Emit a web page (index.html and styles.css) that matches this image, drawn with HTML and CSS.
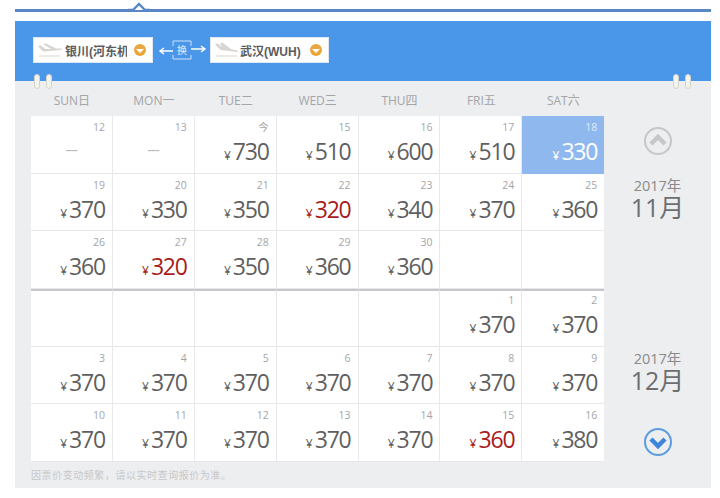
FILE: index.html
```html
<!DOCTYPE html>
<html lang="en">
  <head>
    <meta charset="UTF-8" />
    <title>Fare Calendar</title>
    <link rel="stylesheet" href="styles.css">
  </head>
  <body>
    <div class="topline">
      <svg class="notch" width="22" height="9" viewBox="0 0 22 9"><path d="M0 8H5L11 2L17 8H22" fill="#fff" stroke="#5a86c6" stroke-width="2.4"/></svg>
    </div>

    <div class="card">
      <div class="route">
        <div class="city city-from">
          <svg class="plane" width="26" height="14" viewBox="0 0 26 14"><path d="M1 3L4 2.500L8 6H14L6 1L9 .5L19 5.500H24Q26 6 24 7L7 8.500Q5 8 1 3ZM2 12.500H23V13.500H2Z" fill="#d9d5d0"/></svg>
          <span class="city-name">银川(河东机</span>
          <span class="pick"><i></i></span>
        </div>
        <div class="swap">
          <svg width="50" height="24" viewBox="0 0 50 24"><path d="M3 13H16M7 10L3 13L7 16M34 11H48M44 8L48 11L44 14" fill="none" stroke="#fff" stroke-width="1.500"/><path d="M16 3H34M16 21H34M16 3V8M34 3V8M16 17V21M34 17V21" fill="none" stroke="#cfe2fa" stroke-width="1"/></svg>
          <span class="swap-label">换</span>
        </div>
        <div class="city city-to">
          <svg class="plane" width="26" height="14" viewBox="0 0 26 14"><path d="M1 1L4 .5L8 4.500L6 0H9L17 6L23 7.500Q25 9 23 9L7 7Q5 6 1 1ZM2 12.500H23V13.500H2Z" fill="#d9d5d0"/></svg>
          <span class="city-name">武汉(WUH)</span>
          <span class="pick"><i></i></span>
        </div>
      </div>

      <span class="rings rings-left"><b></b><b></b></span>
      <span class="rings rings-right"><b></b><b></b></span>

      <div class="body">
        <div class="calendar">
          <div class="weekdays">
            <span>SUN日</span><span>MON一</span><span>TUE二</span><span>WED三</span><span>THU四</span><span>FRI五</span><span>SAT六</span>
          </div>
          <div class="grid">
            <div class="cell"><span class="day">12</span><span class="none">---</span></div>
            <div class="cell"><span class="day">13</span><span class="none">---</span></div>
            <div class="cell"><span class="day">今</span><span class="price"><small>¥</small>730</span></div>
            <div class="cell"><span class="day">15</span><span class="price"><small>¥</small>510</span></div>
            <div class="cell"><span class="day">16</span><span class="price"><small>¥</small>600</span></div>
            <div class="cell"><span class="day">17</span><span class="price"><small>¥</small>510</span></div>
            <div class="cell selected"><span class="day">18</span><span class="price"><small>¥</small>330</span></div>

            <div class="cell"><span class="day">19</span><span class="price"><small>¥</small>370</span></div>
            <div class="cell"><span class="day">20</span><span class="price"><small>¥</small>330</span></div>
            <div class="cell"><span class="day">21</span><span class="price"><small>¥</small>350</span></div>
            <div class="cell low"><span class="day">22</span><span class="price"><small>¥</small>320</span></div>
            <div class="cell"><span class="day">23</span><span class="price"><small>¥</small>340</span></div>
            <div class="cell"><span class="day">24</span><span class="price"><small>¥</small>370</span></div>
            <div class="cell"><span class="day">25</span><span class="price"><small>¥</small>360</span></div>

            <div class="cell"><span class="day">26</span><span class="price"><small>¥</small>360</span></div>
            <div class="cell low"><span class="day">27</span><span class="price"><small>¥</small>320</span></div>
            <div class="cell"><span class="day">28</span><span class="price"><small>¥</small>350</span></div>
            <div class="cell"><span class="day">29</span><span class="price"><small>¥</small>360</span></div>
            <div class="cell"><span class="day">30</span><span class="price"><small>¥</small>360</span></div>
            <div class="cell"></div>
            <div class="cell"></div>

            <div class="cell month-start"></div>
            <div class="cell month-start"></div>
            <div class="cell month-start"></div>
            <div class="cell month-start"></div>
            <div class="cell month-start"></div>
            <div class="cell month-start"><span class="day">1</span><span class="price"><small>¥</small>370</span></div>
            <div class="cell month-start"><span class="day">2</span><span class="price"><small>¥</small>370</span></div>

            <div class="cell"><span class="day">3</span><span class="price"><small>¥</small>370</span></div>
            <div class="cell"><span class="day">4</span><span class="price"><small>¥</small>370</span></div>
            <div class="cell"><span class="day">5</span><span class="price"><small>¥</small>370</span></div>
            <div class="cell"><span class="day">6</span><span class="price"><small>¥</small>370</span></div>
            <div class="cell"><span class="day">7</span><span class="price"><small>¥</small>370</span></div>
            <div class="cell"><span class="day">8</span><span class="price"><small>¥</small>370</span></div>
            <div class="cell"><span class="day">9</span><span class="price"><small>¥</small>370</span></div>

            <div class="cell"><span class="day">10</span><span class="price"><small>¥</small>370</span></div>
            <div class="cell"><span class="day">11</span><span class="price"><small>¥</small>370</span></div>
            <div class="cell"><span class="day">12</span><span class="price"><small>¥</small>370</span></div>
            <div class="cell"><span class="day">13</span><span class="price"><small>¥</small>370</span></div>
            <div class="cell"><span class="day">14</span><span class="price"><small>¥</small>370</span></div>
            <div class="cell low"><span class="day">15</span><span class="price"><small>¥</small>360</span></div>
            <div class="cell"><span class="day">16</span><span class="price"><small>¥</small>380</span></div>
          </div>
          <p class="note">因票价变动频繁，请以实时查询报价为准。</p>
        </div>

        <div class="side">
          <svg class="arrow" width="30" height="30" viewBox="0 0 30 30"><circle cx="15" cy="15" r="13" fill="none" stroke="#c6c8c8" stroke-width="2"/><path d="M8 18L15 11L22 18" fill="none" stroke="#c6c8c8" stroke-width="4.500"/></svg>
          <div class="month month-nov"><span>2017年</span><strong>11月</strong></div>
          <div class="month month-dec"><span>2017年</span><strong>12月</strong></div>
          <svg class="arrow arrow-down" width="30" height="30" viewBox="0 0 30 30"><circle cx="15" cy="15" r="13" fill="none" stroke="#5c9ce0" stroke-width="2"/><path d="M8 12L15 19L22 12" fill="none" stroke="#3f86d8" stroke-width="4.500"/></svg>
        </div>
      </div>
    </div>
  </body>
</html>
```

FILE: styles.css
```css
/* General styles */
* {
  box-sizing: border-box;
}

body {
  margin: 0;
  background-color: #fff;
  font-family: "Open Sans", "Noto Sans CJK SC", sans-serif;
  padding-top: 9px;
}

.topline {
  position: relative;
  height: 3px;
  margin: 0 9px 0 15px;
  background-color: #5a86c6;
}

.notch {
  position: absolute;
  left: 113px;
  top: -7px;
}

.card {
  position: relative;
  width: 696px;
  margin: 9px 0 0 15px;
  background-color: #edeef0;
}

/* Route bar */
.route {
  display: flex;
  align-items: center;
  height: 60px;
  padding: 0 0 0 18px;
  background-color: #4a96e8;
}

.city {
  display: flex;
  align-items: center;
  height: 26px;
  margin-top: -2px;
  background-color: #fff;
  border: 1px solid #dfe7f2;
  padding-left: 3px;
}

.city-from {
  width: 120px;
}

.city-to {
  width: 119px;
}

.plane {
  flex: none;
}

.city-from .plane {
  margin-right: 2px;
}

.city-name {
  width: 62px;
  overflow: hidden;
  white-space: nowrap;
  font-size: 12px;
  font-weight: bold;
  color: #5c5c5c;
  font-family: "Liberation Sans", "Noto Sans CJK SC", sans-serif;
}

.city-to .city-name {
  width: 63px;
}

.pick {
  display: flex;
  align-items: center;
  justify-content: center;
  width: 12px;
  height: 12px;
  margin-left: 7px;
  border-radius: 50%;
  background-color: #eaa73b;
}

.pick i {
  width: 0;
  height: 0;
  margin-top: 2px;
  border-left: 4px solid transparent;
  border-right: 4px solid transparent;
  border-top: 4px solid #fff;
}

.swap {
  position: relative;
  width: 57px;
  height: 24px;
  padding-left: 4px;
  margin-top: -2px;
}

.swap-label {
  position: absolute;
  left: 23px;
  top: 5px;
  font-size: 10px;
  line-height: 14px;
  width: 12px;
  text-align: center;
  color: #e6f0fc;
  font-family: "Noto Sans CJK SC", sans-serif;
}

/* Binder rings */
.rings {
  position: absolute;
  top: 53px;
  display: flex;
  gap: 6px;
}

.rings-left {
  left: 19px;
}

.rings-right {
  left: 658px;
}

.rings b {
  width: 6px;
  height: 15px;
  border-radius: 3px;
  background-color: #f4f3ec;
  border: 1px solid #d5d4cc;
}

/* Calendar */
.body {
  display: flex;
  height: 407px;
}

.calendar {
  width: 589px;
  padding-left: 16px;
}

.weekdays {
  display: grid;
  grid-template-columns: repeat(7, 81.9px);
  height: 35px;
  align-items: center;
  text-align: center;
  font-size: 12px;
  color: #a3a5a8;
  padding-top: 2px;
}

.grid {
  display: grid;
  grid-template-columns: repeat(7, 81.9px);
  grid-auto-rows: 57.7px;
  width: 573px;
  background-color: #fff;
}

.cell {
  display: flex;
  flex-direction: column;
  align-items: flex-end;
  padding: 4px 7px 0 0;
  border-right: 1px solid #e8e8ec;
  border-bottom: 1px solid #e8e8ec;
  color: #5f5f5f;
}

.cell:nth-child(7n) {
  border-right: none;
}

.month-start {
  border-top: 2px solid #c5c7ca;
  padding-top: 2px;
}

.day {
  height: 14px;
  font-size: 10.500px;
  line-height: 14px;
  color: #a5a5a8;
}

.price {
  margin-top: 3px;
  font-size: 23px;
  line-height: 28px;
  letter-spacing: -1.2px;
}

.price small {
  font-size: 12px;
  letter-spacing: 0;
  margin-right: 2px;
}

.none {
  margin: 5px 28px 0 0;
  font-size: 15px;
  line-height: 20px;
  letter-spacing: -1px;
  color: #b5b5b5;
}

.low .price {
  color: #a81c1c;
}

.selected {
  background-color: #8fb9ee;
  border-color: #8fb9ee;
}

.selected .day {
  color: #dfeafa;
}

.selected .price {
  color: #fff;
}

.note {
  margin: 6px 0 0;
  font-size: 10px;
  line-height: 14px;
  letter-spacing: 0.55px;
  color: #c6c8ca;
  font-family: "Noto Sans CJK SC", sans-serif;
}

/* Month side panel */
.side {
  display: flex;
  flex-direction: column;
  align-items: center;
  flex: 1;
  padding-top: 45px;
  color: #6c6e70;
}

.arrow {
  flex: none;
}

.month {
  display: flex;
  flex-direction: column;
  align-items: center;
}

.month span {
  font-size: 14.500px;
  line-height: 16px;
  color: #888a8c;
}

.month strong {
  font-size: 25px;
  font-weight: normal;
  line-height: 27px;
}

.month-nov {
  margin-top: 22px;
}

.month-dec {
  margin-top: 130px;
}

.arrow-down {
  margin-top: 33px;
}
```
